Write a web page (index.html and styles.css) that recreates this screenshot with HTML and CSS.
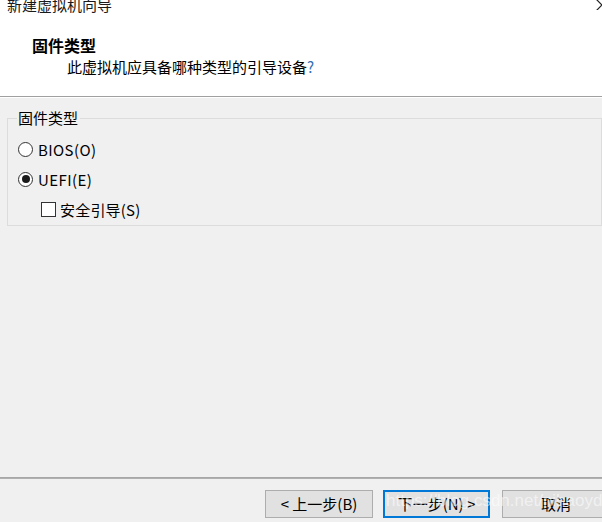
FILE: index.html
```html
<!DOCTYPE html>
<html lang="zh-CN">
<head>
<meta charset="utf-8">
<title>新建虚拟机向导</title>
<link rel="stylesheet" href="styles.css">
</head>
<body>
<div class="window">
  <header class="header">
    <div class="title-row">
      <span class="title">新建虚拟机向导</span>
      <svg class="close" width="10" height="10" viewBox="0 0 10 10"><path d="M1 -2 L8 5 M8 5 L1 12" stroke="#222" stroke-width="1.2" fill="none"/></svg>
    </div>
    <h1 class="heading">固件类型</h1>
    <p class="subtitle">此虚拟机应具备哪种类型的引导设备<span class="q">?</span></p>
  </header>
  <div class="sep"></div>
  <main class="content">
    <fieldset class="group">
      <legend class="legend">固件类型</legend>
      <div class="option">
        <span class="radio"></span><span>BIOS(O)</span>
      </div>
      <div class="option">
        <span class="radio checked"></span><span>UEFI(E)</span>
      </div>
      <div class="option sub">
        <span class="check"></span><span>安全引导(S)</span>
      </div>
    </fieldset>
  </main>
  <div class="sep bottom"></div>
  <footer class="footer">
    <button class="btn">&lt; 上一步(B)</button>
    <button class="btn focus">下一步(N) &gt;</button>
    <button class="btn cancel">取消</button>
    <span class="watermark">https://blog.csdn.net/nihaoyda</span>
  </footer>
</div>
</body>
</html>
```
FILE: styles.css
```css
* { box-sizing: border-box; }
html, body { margin: 0; padding: 0; }
body {
  width: 602px;
  height: 522px;
  overflow: hidden;
  font-family: "Noto Sans CJK SC", "Noto Sans", sans-serif;
  font-size: 15px;
  color: #000;
  background: #f0f0f0;
}
.window {
  display: flex;
  flex-direction: column;
  height: 522px;
}
.header {
  background: #fff;
  height: 96px;
  flex: none;
}
.title-row {
  display: flex;
  justify-content: space-between;
  align-items: flex-start;
  height: 14px;
}
.title {
  font-size: 15px;
  line-height: 15px;
  margin-top: -3px;
  padding-left: 7px;
  color: #1a1a1a;
}
.close { margin-right: -2px; margin-top: 0; }
.heading {
  margin: 21px 0 0 32px;
  font-size: 16px;
  line-height: 20px;
  font-weight: bold;
}
.subtitle {
  margin: 2px 0 0 67px;
  font-size: 15px;
  line-height: 20px;
}
.q { color: #2f6fb8; }
.sep {
  flex: none;
  height: 2px;
  border-top: 1px solid #a0a0a0;
  border-bottom: 1px solid #fff;
}
.sep.bottom {
  border-top: 1px solid #a8a8a8;
  border-bottom: 1px solid #b0b0b0;
}
.content {
  flex: 1;
  padding: 12px 0 0 7px;
}
.group {
  margin: 0;
  width: 595px;
  height: 116px;
  border: 1px solid #dcdcdc;
  padding: 8px 0 0 10px;
}
.legend {
  font-size: 15px;
  line-height: 16px;
  margin-left: -1px;
  padding: 0 2px 0 1px;
}
.option {
  display: flex;
  align-items: center;
  height: 30px;
  gap: 5px;
  font-size: 15px;
  letter-spacing: 0.4px;
}
.option.sub { padding-left: 23px; gap: 4px; letter-spacing: 0.2px; }
.radio {
  flex: none;
  width: 15px;
  height: 15px;
  border: 1px solid #333;
  border-radius: 50%;
  background: #fff;
  display: flex;
  align-items: center;
  justify-content: center;
}
.radio.checked::after {
  content: "";
  width: 8px;
  height: 8px;
  border-radius: 50%;
  background: #1a1a1a;
}
.check {
  flex: none;
  width: 15px;
  height: 15px;
  border: 1px solid #333;
  background: #fff;
}
.footer {
  flex: none;
  height: 43px;
  position: relative;
  display: flex;
  align-items: flex-start;
  padding: 11px 0 0 265px;
}
.btn {
  flex: none;
  width: 108px;
  height: 28px;
  background: #e1e1e1;
  border: 1px solid #adadad;
  font-family: "Noto Sans CJK SC", "Noto Sans", sans-serif;
  font-size: 15px;
  color: #000;
  padding: 0;
  line-height: 24px;
}
.btn.focus {
  margin-left: 10px;
  width: 107px;
  border: 2px solid #0078d7;
}
.btn.cancel { margin-left: 12px; }
.watermark {
  position: absolute;
  left: 386px;
  top: 12px;
  font-family: "Liberation Sans", Arial, sans-serif;
  font-size: 17px;
  color: rgba(255, 255, 255, 0.55);
  white-space: nowrap;
  pointer-events: none;
}
```
